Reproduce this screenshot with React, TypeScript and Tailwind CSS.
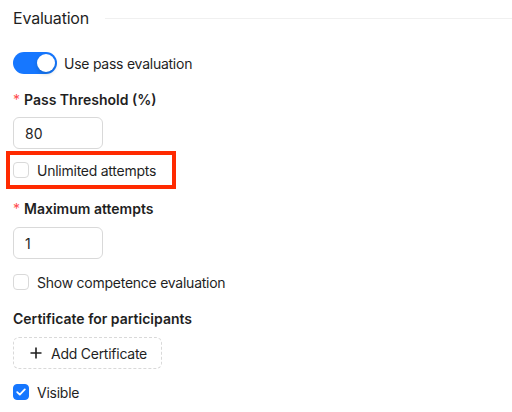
import React, { useState } from "react";

const Label: React.FC<{ required?: boolean; children: React.ReactNode; className?: string }> = ({
  required,
  children,
  className = "",
}) => (
  <div className={`flex items-center h-[22px] text-[14px] font-semibold text-[#1f1f1f] ${className}`}>
    {required && <span className="text-[#ff4d4f] mr-[4px] font-normal">*</span>}
    {children}
  </div>
);

const Check: React.FC<{ checked?: boolean; label: string; className?: string }> = ({
  checked = false,
  label,
  className = "",
}) => {
  const [on, setOn] = useState(checked);
  return (
    <label className={`flex items-center h-[22px] cursor-pointer ${className}`} onClick={() => setOn(!on)}>
      <span
        className={`w-[16px] h-[16px] rounded-[4px] border flex items-center justify-center ${
          on ? "bg-[#1677ff] border-[#1677ff]" : "bg-white border-[#d9d9d9]"
        }`}
      >
        {on && (
          <svg width="10" height="8" viewBox="0 0 10 8" fill="none">
            <path d="M1.2 4.1L3.8 6.6L8.8 1.4" stroke="white" strokeWidth="1.8" strokeLinecap="round" strokeLinejoin="round" />
          </svg>
        )}
      </span>
      <span className="ml-[8px] text-[14px] text-[#1f1f1f] tracking-[-0.25px]">{label}</span>
    </label>
  );
};

const NumberInput: React.FC<{ value: string; className?: string }> = ({ value, className = "" }) => (
  <input
    defaultValue={value}
    className={`w-[90px] h-[32px] px-[11px] rounded-[6px] border border-[#d9d9d9] text-[14px] text-[#1f1f1f] outline-none ${className}`}
  />
);

export default function App() {
  const [passEval, setPassEval] = useState(true);

  return (
    <div className="w-[512px] h-[412px] bg-white pl-[13px] overflow-hidden font-['Inter','Liberation_Sans',sans-serif]">
      {/* Section title */}
      <div className="flex items-center h-[24px] mt-[6px]">
        <span className="text-[16px] text-[#1f1f1f] tracking-[-0.2px]">Evaluation</span>
        <div className="flex-1 h-px bg-[#f0f0f0] ml-[16px]"></div>
      </div>

      {/* Toggle */}
      <div className="flex items-center mt-[22px] h-[22px]">
        <button
          onClick={() => setPassEval(!passEval)}
          className={`relative w-[44px] h-[22px] rounded-full ${passEval ? "bg-[#1677ff]" : "bg-[#bfbfbf]"}`}
        >
          <span
            className={`absolute top-[2px] w-[18px] h-[18px] rounded-full bg-white shadow-[0_2px_4px_rgba(0,35,11,0.2)] ${
              passEval ? "left-[24px]" : "left-[2px]"
            }`}
          ></span>
        </button>
        <span className="ml-[7px] text-[14px] text-[#1f1f1f] tracking-[-0.25px]">Use pass evaluation</span>
      </div>

      <Label required className="mt-[14px]">Pass Threshold (%)</Label>
      <NumberInput value="80" className="mt-[7px] block" />

      <div className="relative mt-[10px] w-fit">
        <Check label="Unlimited attempts" />
        <div className="absolute left-[-7px] top-[-8px] w-[170px] h-[38px] border-[4px] border-[#ff2a00] pointer-events-none"></div>
      </div>

      <Label required className="mt-[16px]">Maximum attempts</Label>
      <NumberInput value="1" className="mt-[8px] block" />

      <Check label="Show competence evaluation" className="mt-[12px]" />

      <Label className="mt-[14px]">Certificate for participants</Label>
      <button className="mt-[8px] flex items-center whitespace-nowrap h-[32px] w-[149px] px-[15px] rounded-[6px] border border-dashed border-[#d9d9d9] bg-white text-[14px] text-[#1f1f1f] tracking-[-0.25px]">
        <svg width="14" height="14" viewBox="0 0 14 14" fill="none" className="mr-[8px] shrink-0">
          <path d="M7 1.5V12.5M1.5 7H12.5" stroke="#1f1f1f" strokeWidth="1.6" />
        </svg>
        Add Certificate
      </button>

      <Check checked label="Visible" className="mt-[12px]" />
    </div>
  );
}
